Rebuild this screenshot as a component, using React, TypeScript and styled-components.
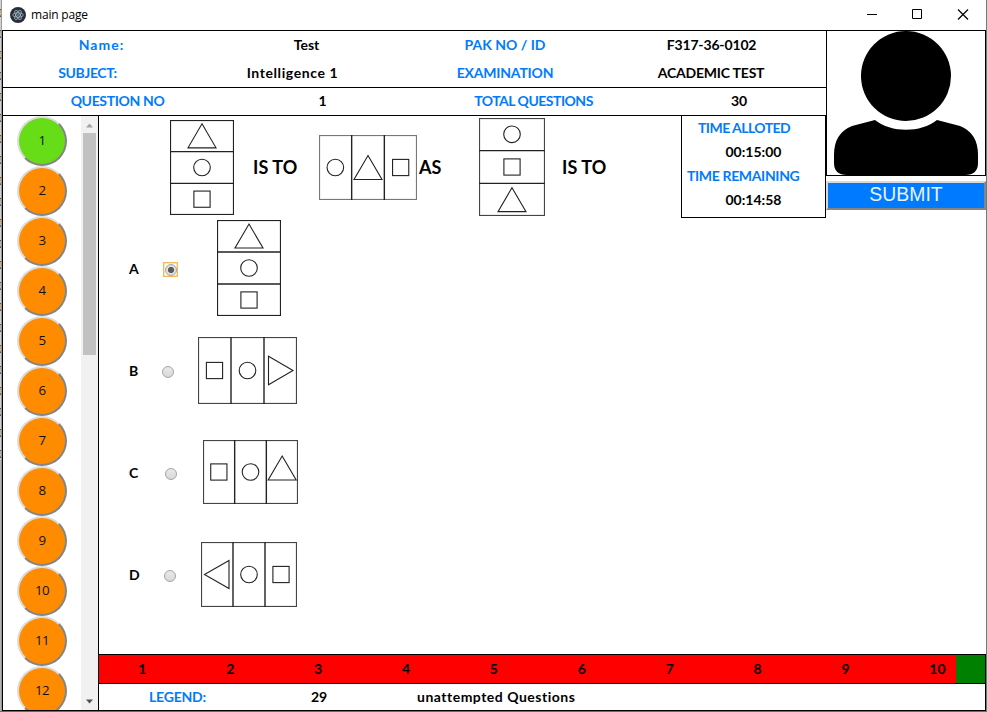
import React, { useState } from 'react';
import styled, { createGlobalStyle } from 'styled-components';

const BLUE = '#007bff';

const GlobalStyle = createGlobalStyle`
  * { box-sizing: border-box; }
  body { margin: 0; background: #fff; overflow: hidden; }
`;

const Desktop = styled.div`
  display: flex;
  width: 987px;
  height: 712px;
  border-right: 1px solid #777;
  border-bottom: 1px solid #6a6a6a;
  background: #fff;
  color: #000;
  font: 700 14px/1.2 'Century Gothic', Lato, 'Liberation Sans', sans-serif;
`;

const DesktopEdge = styled.div`
  width: 2px;
  border-right: 1px solid #999;
  background:
    linear-gradient(transparent 460px, #b4b4b4 460px),
    repeating-linear-gradient(#d2d2d2 0 9px, #555 9px 10px, #d8a868 10px 13px, #bbb 13px 15px, #6688aa 15px 16px, #555 16px 17px, #d2d2d2 17px 21px);
`;

const AppWindow = styled.div`
  display: flex;
  flex-direction: column;
  width: 984px;
`;

const TitleBar = styled.header`
  display: flex;
  align-items: center;
  height: 30px;
  padding-left: 8px;
  font: 400 12px/16px 'Segoe UI', 'Open Sans', sans-serif;
  letter-spacing: -0.2px;
`;

const WindowTitle = styled.span`
  flex: 1;
  padding: 0 0 0 5px;
`;

const WindowControls = styled.div`
  display: flex;
  gap: 34px;
  padding-right: 17px;
  margin-top: -2px;
`;

const Frame = styled.main`
  display: grid;
  grid-template-columns: 96px 727px 160px;
  grid-template-rows: 85px 538px 30px 26px;
  border: 1px solid #000;
  border-right: 0;
`;

const Header = styled.section`
  grid-column: 1 / 3;
  border-bottom: 1px solid #000;
`;

const InfoRow = styled.div<{ $columns: string; $ruled?: boolean }>`
  display: grid;
  grid-template-columns: ${p => p.$columns};
  align-items: center;
  justify-items: center;
  height: 28px;
  border-top: ${p => (p.$ruled ? '1px solid #000' : '0')};
`;

const Text = styled.span<{ $label?: boolean; $track?: number }>`
  color: ${p => (p.$label ? BLUE : '#000')};
  letter-spacing: ${p => p.$track ?? 0}px;
  white-space: nowrap;
`;

const SidePanel = styled.aside`
  grid-column: 3;
  grid-row: 1 / 3;
  display: flex;
  flex-direction: column;
  gap: 5px;
`;

const Photo = styled.div`
  display: flex;
  justify-content: center;
  height: 145px;
  border: 1px solid #000;
  border-top: 0;
`;

const SubmitButton = styled.button`
  height: 29px;
  padding: 0 0 2px;
  border: 2px solid;
  border-color: #d9d9d9 #858585 #858585 #d9d9d9;
  background: ${BLUE};
  color: #e6f2ff;
  font: 400 19.4px/23px 'Liberation Sans', Arial, sans-serif;
`;

const Sidebar = styled.nav`
  grid-column: 1;
  grid-row: 2 / 5;
  display: flex;
  height: 594px;
  overflow: hidden;
  border-right: 1px solid #000;
`;

const QuestionList = styled.div`
  display: flex;
  flex-direction: column;
  width: 78px;
  padding-left: 14px;
`;

const QuestionButton = styled.button<{ $active: boolean }>`
  flex: none;
  width: 50px;
  height: 50px;
  padding: 0 0 2px;
  border: 2px solid;
  border-color: #dcdcdc #858585 #858585 #dcdcdc;
  border-radius: 50%;
  background: ${p => (p.$active ? '#66dd17' : '#ff8c00')};
  color: #111;
  font: 400 13.3px/18px 'Open Sans', sans-serif;
  letter-spacing: -0.6px;
`;

const ScrollTrack = styled.div`
  display: flex;
  flex-direction: column;
  align-items: center;
  justify-content: space-between;
  width: 17px;
  padding: 7px 0 6px;
  background: #f1f1f1;
`;

const ScrollThumb = styled.div`
  width: 13px;
  height: 222px;
  margin: 5px 0 auto;
  background: #c1c1c1;
`;

const Work = styled.section`
  grid-column: 2;
  grid-row: 2;
`;

const PromptBar = styled.div`
  display: flex;
  height: 102px;
`;

const Prompt = styled.div`
  display: flex;
  align-items: center;
  width: 582px;
  padding-left: 71px;
`;

const Word = styled.span<{ $lead: number; $width: number }>`
  flex: none;
  width: ${p => p.$width}px;
  padding: 2px 0 0 ${p => p.$lead}px;
  font-size: 18px;
  letter-spacing: 0.1px;
  white-space: nowrap;
`;

const TimeBox = styled.div`
  display: grid;
  grid-template-rows: repeat(4, 24px);
  align-items: center;
  width: 145px;
  border: 1px solid #000;
  border-top: 0;
`;

const TimeLine = styled.div<{ $indent: number }>`
  padding-left: ${p => p.$indent}px;
`;

const Option = styled.label`
  display: flex;
  align-items: center;
  height: 102px;
  padding-left: 30px;
`;

const OptionLetter = styled.span`
  width: 20px;
`;

const RadioSlot = styled.span<{ $gap: number; $on: boolean }>`
  flex: none;
  display: flex;
  align-items: center;
  justify-content: center;
  width: 15px;
  height: 15px;
  margin: 1px 0 0 ${p => p.$gap}px;
  border: 1px solid ${p => (p.$on ? '#f5b95a' : 'transparent')};
  box-shadow: ${p => (p.$on ? 'inset 0 0 0 .5px #f7c980' : 'none')};
`;

const RadioInput = styled.input`
  flex: none;
  appearance: none;
  width: 12px;
  height: 12px;
  margin: 0;
  border: 1px solid #a4a4a4;
  border-radius: 50%;
  outline: 0;
  background: linear-gradient(#e9e9e9, #d9d9d9);
  &:checked {
    background: radial-gradient(circle, #5a5a5a 0 2.7px, #e0e0e0 3.5px);
  }
`;

const FigureSlot = styled.span<{ $gap: number }>`
  flex: none;
  display: flex;
  margin: -2px 0 0 ${p => p.$gap}px;
`;

const AttemptStrip = styled.div`
  grid-column: 2 / 4;
  display: flex;
  border: 1px solid #000;
  border-left: 0;
  background: #008000;
`;

const Attempt = styled.div`
  flex: 0 0 87.9px;
  display: flex;
  align-items: center;
  padding-left: 39.3px;
  background: #f00;
  &:nth-child(10) { flex-basis: 65.5px; }
`;

const Legend = styled.footer`
  grid-column: 2 / 4;
  display: grid;
  grid-template-columns: 162px 106px 1fr;
  align-items: center;
  padding-left: 50px;
  border-right: 1px solid #000;
`;

type Shape = 'circle' | 'square' | 'up' | 'left' | 'right';

const Glyph = ({ shape, x, y }: { shape: Shape; x: number; y: number }) => {
  if (shape === 'circle') return <circle cx={x} cy={y} r="8.3" />;
  if (shape === 'square') return <rect x={x - 8.1} y={y - 8.1} width="16.2" height="16.2" />;
  const points = {
    up: `${x},${y - 12} ${x + 14},${y + 12} ${x - 14},${y + 12}`,
    right: `${x - 12},${y - 14.3} ${x + 12.5},${y} ${x - 12},${y + 14.3}`,
    left: `${x + 12},${y - 14} ${x - 12.5},${y} ${x + 12},${y + 14}`,
  }[shape];
  return <polygon points={points} />;
};

interface FigureProps {
  w: number;
  h: number;
  shapes: Shape[];
  vertical?: boolean;
  stroke?: string;
  lift?: number;
}

const Figure = ({ w, h, shapes, vertical, stroke = '#222', lift = 0 }: FigureProps) => (
  <svg width={w} height={h} fill="none" stroke="#222" strokeWidth="1.1">
    <rect x=".5" y=".5" width={w - 1} height={h - 1} stroke={stroke} strokeWidth="1.2" />
    {[1, 2].map(i =>
      vertical ? (
        <path key={i} d={`M0 ${(h * i) / 3}H${w}`} strokeWidth="1.4" />
      ) : (
        <path key={i} d={`M${(w * i) / 3} 0V${h}`} strokeWidth="1.4" />
      ),
    )}
    {shapes.map((s, i) => {
      const at = (i + 0.5) / 3;
      return (
        <Glyph
          key={s}
          shape={s}
          x={vertical ? w / 2 : w * at}
          y={vertical ? h * at : h / 2 - (s === 'up' ? lift : 0)}
        />
      );
    })}
  </svg>
);

const AtomIcon = () => (
  <svg width="16" height="16" viewBox="0 0 16 16" fill="none" stroke="#a5c4cc" strokeWidth=".75">
    <circle cx="8" cy="8" r="8" fill="#2b2e3a" stroke="none" />
    <ellipse cx="8" cy="8" rx="5.2" ry="2.1" />
    <ellipse cx="8" cy="8" rx="5.2" ry="2.1" transform="rotate(60 8 8)" />
    <ellipse cx="8" cy="8" rx="5.2" ry="2.1" transform="rotate(120 8 8)" />
    <circle cx="8" cy="8" r=".8" fill="#a5c4cc" stroke="none" />
  </svg>
);

const PersonIcon = () => (
  <svg width="158" height="144">
    <circle cx="79" cy="45" r="45" />
    <path d="M48 89C64 102 94 102 110 89L133 95Q151 102 151 124V132Q151 144 138 144H20Q7 144 7 132V124Q7 102 25 95Z" />
  </svg>
);

const options: { letter: string; radioGap: number; figureGap: number; figure: FigureProps }[] = [
  { letter: 'A', radioGap: 14, figureGap: 39, figure: { w: 64, h: 96, vertical: true, shapes: ['up', 'circle', 'square'] } },
  { letter: 'B', radioGap: 11, figureGap: 23, figure: { w: 99, h: 67, stroke: '#444', shapes: ['square', 'circle', 'right'] } },
  { letter: 'C', radioGap: 14, figureGap: 25, figure: { w: 95, h: 64, stroke: '#444', shapes: ['square', 'circle', 'up'], lift: 4 } },
  { letter: 'D', radioGap: 13, figureGap: 24, figure: { w: 96, h: 65, stroke: '#444', shapes: ['left', 'circle', 'square'] } },
];

const range = (n: number) => Array.from({ length: n }, (_, i) => i + 1);

export default function App() {
  const [answer, setAnswer] = useState('A');
  return (
    <Desktop>
      <GlobalStyle />
      <DesktopEdge />
      <AppWindow>
        <TitleBar>
          <AtomIcon />
          <WindowTitle>main page</WindowTitle>
          <WindowControls>
            <svg width="11" height="11" stroke="#000"><path d="M0 5.5H10" /></svg>
            <svg width="11" height="11" stroke="#000" fill="none"><path d="M.5 .5H9.5V9.5H.5Z" /></svg>
            <svg width="12" height="11" stroke="#000" strokeWidth="1.2"><path d="M1 .5L11 10.5M11 .5L1 10.5" /></svg>
          </WindowControls>
        </TitleBar>
        <Frame>
          <Header>
            <InfoRow $columns="197px 213px 184px 229px">
              <Text $label $track={1}>Name:</Text>
              <Text>Test</Text>
              <Text $label>PAK NO / ID</Text>
              <Text $track={-0.15}>F317-36-0102</Text>
            </InfoRow>
            <InfoRow $columns="169px 241px 184px 228px">
              <Text $label $track={-0.4}>SUBJECT:</Text>
              <Text $track={0.6}>Intelligence 1</Text>
              <Text $label $track={-0.2}>EXAMINATION</Text>
              <Text $track={-0.2}>ACADEMIC TEST</Text>
            </InfoRow>
            <InfoRow $ruled $columns="229px 181px 241px 170px">
              <Text $label $track={-0.35}>QUESTION NO</Text>
              <Text>1</Text>
              <Text $label $track={-0.5}>TOTAL QUESTIONS</Text>
              <Text>30</Text>
            </InfoRow>
          </Header>

          <SidePanel>
            <Photo><PersonIcon /></Photo>
            <SubmitButton>SUBMIT</SubmitButton>
          </SidePanel>

          <Sidebar>
            <QuestionList>
              {range(12).map(n => (
                <QuestionButton key={n} $active={n === 1}>{n}</QuestionButton>
              ))}
            </QuestionList>
            <ScrollTrack>
              <svg width="7" height="5" fill="#a3a3a3"><path d="M0 4.5L3.5 .5L7 4.5Z" /></svg>
              <ScrollThumb />
              <svg width="7" height="5" fill="#505050"><path d="M0 .5L3.5 4.5L7 .5Z" /></svg>
            </ScrollTrack>
          </Sidebar>

          <Work>
            <PromptBar>
              <Prompt>
                <Figure w={64} h={95} vertical shapes={['up', 'circle', 'square']} />
                <Word $lead={19} $width={85}>IS TO</Word>
                <Figure w={98} h={65} stroke="#777" shapes={['circle', 'up', 'square']} />
                <Word $lead={2} $width={62}>AS</Word>
                <Figure w={66} h={98} vertical stroke="#444" shapes={['circle', 'square', 'up']} />
                <Word $lead={17} $width={80}>IS TO</Word>
              </Prompt>
              <TimeBox>
                <TimeLine $indent={16}><Text $label $track={-0.55}>TIME ALLOTED</Text></TimeLine>
                <TimeLine $indent={43.5}><Text>00:15:00</Text></TimeLine>
                <TimeLine $indent={5}><Text $label $track={-0.35}>TIME REMAINING</Text></TimeLine>
                <TimeLine $indent={43.5}><Text>00:14:58</Text></TimeLine>
              </TimeBox>
            </PromptBar>
            {options.map(o => (
              <Option key={o.letter}>
                <OptionLetter>{o.letter}</OptionLetter>
                <RadioSlot $gap={o.radioGap} $on={answer === o.letter}>
                  <RadioInput
                    type="radio"
                    name="answer"
                    checked={answer === o.letter}
                    onChange={() => setAnswer(o.letter)}
                  />
                </RadioSlot>
                <FigureSlot $gap={o.figureGap}><Figure {...o.figure} /></FigureSlot>
              </Option>
            ))}
          </Work>

          <AttemptStrip>
            {range(10).map(n => <Attempt key={n}>{n}</Attempt>)}
          </AttemptStrip>

          <Legend>
            <Text $label $track={-0.2}>LEGEND:</Text>
            <Text>29</Text>
            <Text $track={0.5}>unattempted Questions</Text>
          </Legend>
        </Frame>
      </AppWindow>
    </Desktop>
  );
}
